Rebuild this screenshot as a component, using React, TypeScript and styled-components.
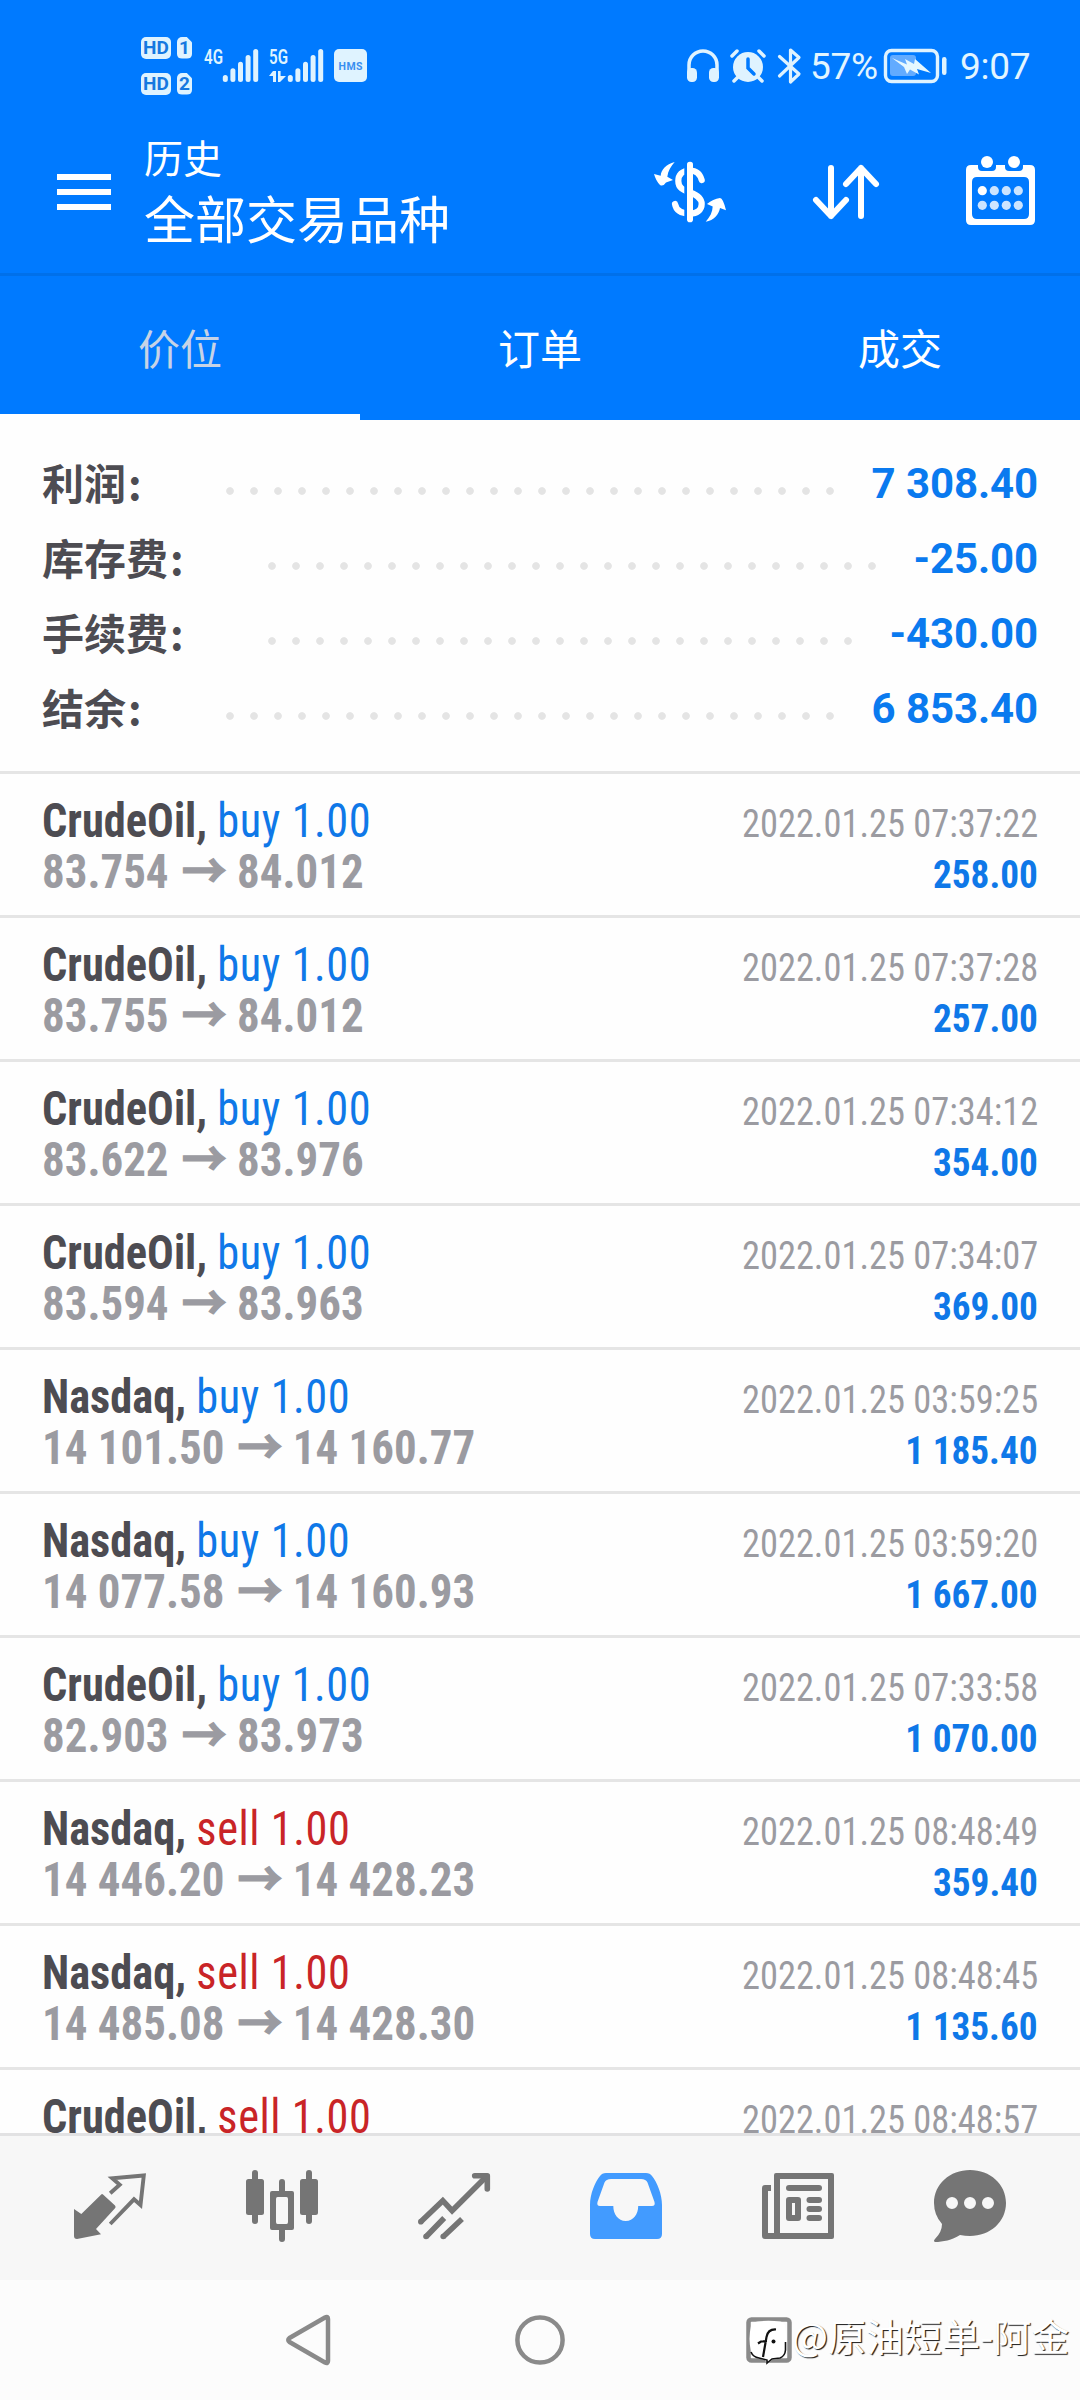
import React from "react";
import styled, { createGlobalStyle } from "styled-components";

const BLUE = "#007aff";
const SANS = `Roboto, "Noto Sans CJK SC", sans-serif`;
const CONDENSED = `"Roboto Condensed", Roboto, "Noto Sans CJK SC", sans-serif`;

const GlobalStyle = createGlobalStyle`
  * { box-sizing: border-box; }
  body { margin: 0; background: #fff; font-family: ${SANS}; }
  svg { display: block; overflow: visible; flex: none; }
`;

const Screen = styled.div`
  width: 1080px;
  height: 2400px;
  display: flex;
  flex-direction: column;
  position: relative;
  overflow: hidden;
  background: #fefefe;
`;

/* ---------- status bar ---------- */

const StatusBar = styled.div`
  flex: none;
  height: 111px;
  padding: 20px 51px 0 141px;
  display: flex;
  align-items: center;
  justify-content: space-between;
  background: ${BLUE};
  color: #dff3ff;
`;

const StatusGroup = styled.div`
  display: flex;
  align-items: center;
`;

const HdColumn = styled.div`
  display: flex;
  flex-direction: column;
  gap: 14px;
`;

const HdRow = styled.div`
  display: flex;
  gap: 6px;
`;

const Badge = styled.span<{ $width: number }>`
  width: ${(p) => p.$width}px;
  height: 22px;
  border-radius: 5px;
  background: #dff3ff;
  color: #1678e0;
  font: 700 19px/22px ${SANS};
  text-align: center;
`;

const SimBadge = styled(Badge)`
  clip-path: polygon(0 0, 62% 0, 100% 26%, 100% 100%, 0 100%);
`;

const StatusIcon = styled.svg<{ $gap: number }>`
  margin-left: ${(p) => p.$gap}px;
`;

const StatusText = styled.span<{ $gap: number; $width: number }>`
  width: ${(p) => p.$width}px;
  margin-left: ${(p) => p.$gap}px;
  padding-top: 3px;
  font: 400 37px/40px ${SANS};
  letter-spacing: -0.3px;
  white-space: nowrap;
  color: #e2f5ff;
`;

/* ---------- toolbar ---------- */

const Toolbar = styled.header`
  flex: none;
  height: 165px;
  padding: 0 42px 0 57px;
  display: flex;
  align-items: center;
  background: ${BLUE};
  border-bottom: 3px solid #0070ea;
`;

const MenuButton = styled.div`
  width: 54px;
  height: 36px;
  display: flex;
  flex-direction: column;
  justify-content: space-between;
`;

const MenuLine = styled.span`
  height: 6px;
  background: #fff;
`;

const Titles = styled.div`
  flex: 1;
  margin-left: 33px;
  padding-top: 4px;
  display: flex;
  flex-direction: column;
  color: #fff;
`;

const Title = styled.div`
  font-size: 39px;
  line-height: 54px;
`;

const Subtitle = styled.div`
  font-size: 51px;
  line-height: 69px;
`;

const ToolbarActions = styled.div`
  display: flex;
  gap: 84px;
`;

/* ---------- tabs ---------- */

const Tabs = styled.nav`
  flex: none;
  height: 144px;
  display: grid;
  grid-template-columns: repeat(3, 1fr);
  background: ${BLUE};
`;

const Tab = styled.div<{ $active?: boolean }>`
  display: flex;
  align-items: center;
  justify-content: center;
  padding-top: ${(p) => (p.$active ? 2 : 0)}px;
  padding-bottom: ${(p) => (p.$active ? 0 : 4)}px;
  border-bottom: ${(p) => (p.$active ? "6px solid #fff" : "0")};
  color: ${(p) => (p.$active ? "#c6d3e6" : "#fff")};
  font-size: 42px;
`;

/* ---------- summary ---------- */

const Summary = styled.section`
  flex: none;
  height: 354px;
  padding: 27px 42px 0 42px;
  border-bottom: 3px solid #e5e5e5;
`;

const SummaryRow = styled.div`
  height: 75px;
  display: flex;
  align-items: center;
  font: 700 42px/75px ${SANS};
`;

const SummaryLabel = styled.span<{ $chars: number }>`
  width: ${(p) => 92 + p.$chars * 42}px;
  padding-bottom: 6px;
  line-height: 69px;
  font-family: "Noto Sans CJK SC", sans-serif;
  color: #4d4c52;
`;

const Colon = styled.span`
  margin-left: 2px;
`;

const Leader = styled.span<{ $dots: number }>`
  width: ${(p) => p.$dots * 24}px;
  height: 8px;
  margin-top: 12px;
  background: radial-gradient(circle at 12px 4px, #e4e4e4 3.4px, transparent 4.2px) 0 0 / 24px 8px;
`;

const SummaryValue = styled.span`
  flex: 1;
  padding-bottom: 2px;
  line-height: 73px;
  text-align: right;
  letter-spacing: -0.1px;
  color: #0a7aef;
`;

/* ---------- deals ---------- */

const DealList = styled.main`
  flex: none;
  height: 1359px;
  overflow: hidden;
`;

const DealRow = styled.article`
  height: 144px;
  padding: 21px 42px 0 42px;
  border-bottom: 3px solid #e5e5e5;
  font-family: ${CONDENSED};
  font-stretch: 75%;
`;

const DealLine = styled.div`
  height: 51px;
  display: flex;
  justify-content: space-between;
  align-items: baseline;
  line-height: 51px;
  white-space: pre;
`;

const DealName = styled.span`
  transform: scaleX(0.925);
  transform-origin: left;
  font-size: 48px;
  font-weight: 700;
  color: #4d4c52;
`;

const DealSide = styled.span<{ $side: Side }>`
  font-weight: 400;
  letter-spacing: 0.6px;
  color: ${(p) => (p.$side === "buy" ? "#0f78e8" : "#c92427")};
`;

const DealPrices = styled.span`
  transform: scaleX(0.936);
  transform-origin: left;
  font-size: 48px;
  font-weight: 700;
  color: #9b9ba1;
`;

const Arrow = styled.span`
  margin: 0 0 0 3px;
  -webkit-text-stroke: 1.4px #9b9ba1;
`;

const DealTime = styled.span`
  transform: scaleX(0.934);
  transform-origin: right;
  font-size: 39px;
  color: #9b9ba1;
`;

const DealProfit = styled.span`
  transform: scaleX(0.955);
  transform-origin: right;
  font-size: 39px;
  font-weight: 700;
  color: #0f78e8;
`;

/* ---------- bottom bars ---------- */

const BottomTabs = styled.nav`
  flex: none;
  height: 147px;
  padding: 0 24px 4px;
  display: grid;
  grid-template-columns: repeat(6, 1fr);
  place-items: center;
  background: #f7f7f7;
  border-top: 3px solid #e2e2e3;
  color: #757575;
`;

const SystemNav = styled.div`
  flex: 1;
  display: grid;
  grid-template-columns: repeat(3, 230px);
  place-content: center;
  place-items: center;
  background: #fcfcfc;
`;

const Watermark = styled.div`
  position: absolute;
  left: 747px;
  bottom: 27px;
  display: flex;
  align-items: center;
  gap: 3px;
  font: 400 38px/52px "Noto Sans CJK SC", sans-serif;
  color: #fff;
  white-space: nowrap;
`;

const WatermarkText = styled.span`
  margin-bottom: 12px;
  text-shadow: 1.2px 1.2px 0.8px #1c1c1c;
`;

/* ---------- data ---------- */

type Side = "buy" | "sell";

const summary = [
  { label: "利润", value: "7 308.40", dots: 26 },
  { label: "库存费", value: "-25.00", dots: 26 },
  { label: "手续费", value: "-430.00", dots: 25 },
  { label: "结余", value: "6 853.40", dots: 26 },
];

const deals: { name: string; side: Side; open: string; close: string; time: string; profit: string }[] = [
  { name: "CrudeOil", side: "buy", open: "83.754", close: "84.012", time: "2022.01.25 07:37:22", profit: "258.00" },
  { name: "CrudeOil", side: "buy", open: "83.755", close: "84.012", time: "2022.01.25 07:37:28", profit: "257.00" },
  { name: "CrudeOil", side: "buy", open: "83.622", close: "83.976", time: "2022.01.25 07:34:12", profit: "354.00" },
  { name: "CrudeOil", side: "buy", open: "83.594", close: "83.963", time: "2022.01.25 07:34:07", profit: "369.00" },
  { name: "Nasdaq", side: "buy", open: "14 101.50", close: "14 160.77", time: "2022.01.25 03:59:25", profit: "1 185.40" },
  { name: "Nasdaq", side: "buy", open: "14 077.58", close: "14 160.93", time: "2022.01.25 03:59:20", profit: "1 667.00" },
  { name: "CrudeOil", side: "buy", open: "82.903", close: "83.973", time: "2022.01.25 07:33:58", profit: "1 070.00" },
  { name: "Nasdaq", side: "sell", open: "14 446.20", close: "14 428.23", time: "2022.01.25 08:48:49", profit: "359.40" },
  { name: "Nasdaq", side: "sell", open: "14 485.08", close: "14 428.30", time: "2022.01.25 08:48:45", profit: "1 135.60" },
  { name: "CrudeOil", side: "sell", open: "", close: "", time: "2022.01.25 08:48:57", profit: "" },
];

/* ---------- icons ---------- */

const Signal = ({ label, gap, data }: { label: string; gap: number; data?: boolean }) => (
  <StatusIcon $gap={gap} width="54" height="34" viewBox="0 0 54 34" fill="#dff3ff">
    <text x="0" y="15" fontSize="20.500" fontWeight="600" fontFamily="Roboto, sans-serif" textLength="19" lengthAdjust="spacingAndGlyphs">
      {label}
    </text>
    {data && <path d="M4 22h3v11H4v-6H0zM9 22h2.600v5H17l-6 6H9z" />}
    {[26, 19.300, 12.700, 6, 0].map((top, i) => (
      <rect key={top} x={18.800 + i * 7.600} y={top} width="5" height={33 - top} rx="2.500" />
    ))}
  </StatusIcon>
);

const Headphones = () => (
  <StatusIcon $gap={0} width="32" height="34" viewBox="0 0 32 34">
    <path d="M2 26V16a14 14 0 0 1 28 0v10" fill="none" stroke="#dff3ff" strokeWidth="3.500" />
    <rect x="0" y="19" width="10" height="14" rx="4.500" fill="#dff3ff" />
    <rect x="22" y="19" width="10" height="14" rx="4.500" fill="#dff3ff" />
  </StatusIcon>
);

const Alarm = () => (
  <StatusIcon $gap={11} width="36" height="34" viewBox="0 0 36 34" stroke="#dff3ff" strokeWidth="3.500" strokeLinecap="round">
    <circle cx="18" cy="18" r="15" fill="#dff3ff" stroke="none" />
    <path d="M2 7 7 2M34 7l-5-5M8 28l-4 4M28 28l4 4" />
    <path d="M18 10v9l6 6" fill="none" stroke={BLUE} />
  </StatusIcon>
);

const Bluetooth = () => (
  <StatusIcon $gap={12} width="23" height="36" viewBox="0 0 23 36" fill="none" stroke="#dff3ff" strokeWidth="3.200" strokeLinejoin="round" strokeLinecap="round">
    <path d="M1.500 8.500 21 26l-8.500 8V2L21 9.500 1.500 28" />
  </StatusIcon>
);

const Battery = () => (
  <StatusIcon $gap={8} width="63" height="34" viewBox="0 0 63 34">
    <rect x="1.500" y="1.500" width="52" height="31" rx="6" fill="none" stroke="#dff3ff" strokeWidth="3.400" />
    <rect x="6" y="6" width="26" height="21" rx="3" fill="#62abff" />
    <path d="M8 9 23 15.500 21 10 30 15 31 10 47 24 33 20 35 25.500 26 20.500 23 25 20 18Z" fill="#e6f8ff" />
    <rect x="58" y="8" width="4.500" height="18" rx="2.200" fill="#dff3ff" />
  </StatusIcon>
);

const CurrencyIcon = () => (
  <svg width="72" height="72" viewBox="0 0 72 72" fill="#fff">
    <path
      d="M47.700 24C46 18 42 14.500 36 14.500C28 14.500 24.300 19 24.300 25C24.300 32 29 34 36 36.500C43 39 47.700 42 47.700 48C47.700 54 43 57.500 36 57.500C27 57.500 22 54 21 48"
      fill="none"
      stroke="#fff"
      strokeWidth="6.200"
      strokeLinecap="round"
    />
    <path d="M30.300 8H33V64H30.300Z" fill={BLUE} />
    <rect x="33" y="5.700" width="6" height="60.500" rx="2.800" />
    <path d="M20.700 6C17 10 14 15 13.300 20.700L19 24L12 26.500Q9 31 6 29Q2 25 0 18L6.700 19.700C7 14 12 8 20.700 6Z" />
    <path d="M51.700 65.700C56 61 58.500 56 58.700 50.500L53 48Q59 43 66 42Q69 42 72 54.300L66 52C65 58 60 64.500 51.700 65.700Z" />
  </svg>
);

const SortIcon = () => (
  <svg width="72" height="72" viewBox="0 0 72 72" fill="none" stroke="#fff" strokeWidth="6" strokeLinecap="round" strokeLinejoin="round">
    <path d="M21 12V60M6 44 21 60 36 44M51 60V12M36 28 51 12 66 28" />
  </svg>
);

const CalendarIcon = () => (
  <svg width="72" height="72" viewBox="0 0 72 72" fill="#fff">
    <path
      fillRule="evenodd"
      d="M5 9H12V11Q12 15 16 15H26Q30 15 30 11V9H39V11Q39 15 43 15H53Q57 15 57 11V9H64Q69 9 69 14V64Q69 69 64 69H5Q0 69 0 64V14Q0 9 5 9ZM11 21Q6 21 6 26V58Q6 63 11 63H58Q63 63 63 58V26Q63 21 58 21Z"
    />
    <circle cx="21" cy="6" r="6" />
    <circle cx="48" cy="6" r="6" />
    {[34.700, 49.300].map((y) =>
      [16.300, 28.300, 40.300, 52.300].map((x) => (
        <circle key={`${x}-${y}`} cx={x} cy={y} r="4.600" opacity={x < 20 && y < 40 ? 1 : 0.800} />
      ))
    )}
  </svg>
);

const TabIcon = ({ children, color = "currentColor" }: { children: React.ReactNode; color?: string }) => (
  <svg width="72" height="72" viewBox="0 -2 72 72" fill={color} stroke="none">
    {children}
  </svg>
);

const QuotesIcon = () => (
  <TabIcon>
    <path d="M0 37 7.300 42 27 22.700Q28 21.500 29.300 22.700L41 33.500Q42.300 35 41 36.300L22 57 27 62.300 3 67Q0 67 0 64Z" />
    <path d="M36.200 21.300 45.700 12.700 38.300 6.300 69.800 3.500 66.500 33 60 27.300 36.200 52" fill="none" stroke="currentColor" strokeWidth="3.900" />
  </TabIcon>
);

const ChartIcon = () => (
  <TabIcon>
    <rect x="0" y="7" width="18" height="36" rx="2.500" />
    <rect x="6" y="-2" width="6" height="54" rx="3" />
    <rect x="54" y="7" width="18" height="36" rx="2.500" />
    <rect x="60" y="-2" width="6" height="54" rx="3" />
    <path fillRule="evenodd" d="M26 19H46Q48 19 48 21V56Q48 58 46 58H26Q24 58 24 56V21Q24 19 26 19ZM31.500 25Q30 25 30 27V50Q30 52 31.500 52H40.500Q42 52 42 50V27Q42 25 40.500 25Z" />
    <path d="M33 20V10a3 3 0 0 1 6 0V20ZM33 57V67a3 3 0 0 0 6 0V57Z" />
  </TabIcon>
);

const TradeIcon = () => (
  <TabIcon>
    <g fill="none" stroke="currentColor" strokeWidth="5.600">
      <path d="M2.500 50 24.800 28.700 34.100 38.700 68.200 4.700" />
      <path d="M56.700 3.700H69.300V17" strokeLinecap="round" strokeLinejoin="round" />
      <path d="M8 64.700 26.200 46M25.200 64.700 44 47" />
    </g>
    <circle cx="2.800" cy="49.800" r="2.800" />
    <circle cx="8" cy="64.500" r="2.800" />
    <circle cx="25.200" cy="64.500" r="2.800" />
  </TabIcon>
);

const HistoryIcon = () => (
  <TabIcon color="#429bff">
    <path
      fillRule="evenodd"
      d="M5 67Q0 67 0 62V33C0 22 5 10 10 4Q12 1 16 1H56Q60 1 62 4C67 10 72 22 72 33V62Q72 67 67 67ZM21 7Q16 7 14.500 10.500L7.500 30Q6.500 34 10 34H23.300C23.300 42 28 49 35.800 49C43.500 49 48.200 42 48.200 34H62Q65.500 34 64.500 30L57.500 10.500Q56 7 51 7Z"
    />
  </TabIcon>
);

const NewsIcon = () => (
  <TabIcon>
    <path fillRule="evenodd" d="M3 13H9V19H6V61H12V3Q12 1 14 1H70Q72 1 72 3V65Q72 67 70 67H3Q0 67 0 64V16Q0 13 3 13ZM18 7V61H66V7Z" />
    <rect x="24" y="13" width="36" height="6" rx="3" />
    <path fillRule="evenodd" d="M27 25H36Q39 25 39 28V46Q39 49 36 49H27Q24 49 24 46V28Q24 25 27 25ZM30 31V43H33V31Z" />
    <rect x="44.500" y="25" width="15.500" height="6" rx="3" />
    <rect x="44.500" y="34" width="15.500" height="6" rx="3" />
    <rect x="44.500" y="43" width="15.500" height="6" rx="3" />
  </TabIcon>
);

const ChatIcon = () => (
  <TabIcon>
    <path
      fillRule="evenodd"
      d="M36 -2C56 -2 72 12 72 31C72 50 56 64 36 64Q31 64 26 63C18 68 9 70 1 70Q-1 69 1 67Q8 60 8 52Q0 43 0 31C0 12 16 -2 36 -2ZM12 31a6 6 0 1 0 12 0a6 6 0 1 0 -12 0ZM30 31a6 6 0 1 0 12 0a6 6 0 1 0 -12 0ZM48 31a6 6 0 1 0 12 0a6 6 0 1 0 -12 0Z"
    />
  </TabIcon>
);

const WatermarkLogo = () => (
  <svg width="42" height="46" viewBox="0 0 42 46">
    <path d="M4 8Q5 4 11 3.500Q21 2 33 3.500Q37 4 38 8Q40 22 38 33Q37 40 31 41L25 42L20 46L18 42L10 40Q4 38 4 33Q1 21 4 8Z" fill="#fff" />
    <path d="M4 34Q6 39 12 40L20 42V45L25 41L33 40Q38 38 38.500 32V24" fill="none" stroke="#111" strokeWidth="1.600" />
    <path d="M29 11.500Q21 11 19.500 19L16 39M11 25.500L14 23.500L20 23" fill="none" stroke="#111" strokeWidth="2.200" />
    <circle cx="26.500" cy="23.500" r="2" fill="#111" />
  </svg>
);

/* ---------- page ---------- */

export default function App() {
  return (
    <>
      <GlobalStyle />
      <Screen>
        <StatusBar>
          <StatusGroup>
            <HdColumn>
              <HdRow>
                <Badge $width={30}>HD</Badge>
                <SimBadge $width={15}>1</SimBadge>
              </HdRow>
              <HdRow>
                <Badge $width={30}>HD</Badge>
                <SimBadge $width={15}>2</SimBadge>
              </HdRow>
            </HdColumn>
            <Signal label="4G" gap={12} />
            <Signal label="5G" gap={11} data />
            <StatusIcon $gap={11} width="33" height="33" viewBox="0 0 33 33">
              <rect width="33" height="33" rx="5" fill="#dff3ff" />
              <text x="4.500" y="20.500" fontSize="10.500" fontWeight="700" fontFamily="Roboto, sans-serif" fill="#3a8ff0" textLength="24">
                HMS
              </text>
            </StatusIcon>
          </StatusGroup>
          <StatusGroup>
            <Headphones />
            <Alarm />
            <Bluetooth />
            <StatusText $gap={9} $width={66}>57%</StatusText>
            <Battery />
            <StatusText $gap={13} $width={69}>9:07</StatusText>
          </StatusGroup>
        </StatusBar>

        <Toolbar>
          <MenuButton>
            <MenuLine />
            <MenuLine />
            <MenuLine />
          </MenuButton>
          <Titles>
            <Title>历史</Title>
            <Subtitle>全部交易品种</Subtitle>
          </Titles>
          <ToolbarActions>
            <CurrencyIcon />
            <SortIcon />
            <CalendarIcon />
          </ToolbarActions>
        </Toolbar>

        <Tabs>
          <Tab $active>价位</Tab>
          <Tab>订单</Tab>
          <Tab>成交</Tab>
        </Tabs>

        <Summary>
          {summary.map((s) => (
            <SummaryRow key={s.label}>
              <SummaryLabel $chars={s.label.length}>
                {s.label}
                <Colon>:</Colon>
              </SummaryLabel>
              <Leader $dots={s.dots} />
              <SummaryValue>{s.value}</SummaryValue>
            </SummaryRow>
          ))}
        </Summary>

        <DealList>
          {deals.map((d) => (
            <DealRow key={d.time}>
              <DealLine>
                <DealName>
                  {d.name}, <DealSide $side={d.side}>{d.side} 1.00</DealSide>
                </DealName>
                <DealTime>{d.time}</DealTime>
              </DealLine>
              {d.open && (
                <DealLine>
                  <DealPrices>
                    {d.open} <Arrow>→</Arrow> {d.close}
                  </DealPrices>
                  <DealProfit>{d.profit}</DealProfit>
                </DealLine>
              )}
            </DealRow>
          ))}
        </DealList>

        <BottomTabs>
          <QuotesIcon />
          <ChartIcon />
          <TradeIcon />
          <HistoryIcon />
          <NewsIcon />
          <ChatIcon />
        </BottomTabs>

        <SystemNav>
          <svg width="46" height="52" viewBox="0 0 46 52" fill="none" stroke="#8a8a8a" strokeWidth="4.500" strokeLinejoin="round">
            <path d="M38 3.500Q41 2 41 5V47Q41 50 38 48.500L2.500 28Q0 26 2.500 24Z" />
          </svg>
          <svg width="52" height="52" viewBox="0 0 52 52" fill="none" stroke="#8a8a8a" strokeWidth="4.500">
            <circle cx="26" cy="26" r="22.600" />
          </svg>
          <svg width="46" height="46" viewBox="0 0 46 46" fill="none" stroke="#8a8a8a" strokeWidth="4.500">
            <rect x="1.500" y="2.500" width="41" height="41" rx="3" />
          </svg>
        </SystemNav>

        <Watermark>
          <WatermarkLogo />
          <WatermarkText>@原油短单-阿金</WatermarkText>
        </Watermark>
      </Screen>
    </>
  );
}
